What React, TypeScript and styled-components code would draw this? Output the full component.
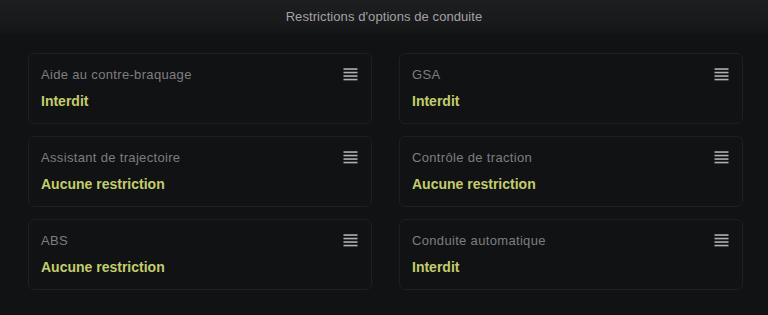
import React from "react";
import styled, { createGlobalStyle } from "styled-components";

interface Option {
  label: string;
  value: string;
}

const GlobalStyle = createGlobalStyle`
  html, body {
    margin: 0;
    padding: 0;
    background: #111214;
  }
  body {
    font-family: "Liberation Sans", Arial, sans-serif;
  }
`;

const Page = styled.div`
  width: 768px;
  height: 315px;
  background: #111214;
  overflow: hidden;
`;

const Header = styled.div`
  height: 34px;
  display: flex;
  align-items: center;
  justify-content: center;
  background: linear-gradient(180deg, #1d1e20 0%, #18191b 70%, #141517 100%);
`;

const Title = styled.p`
  margin: 0;
  margin-top: -2px;
  font-size: 13px;
  color: #a3a3a5;
  letter-spacing: 0.08px;
`;

const Grid = styled.div`
  display: grid;
  grid-template-columns: 344px 344px;
  column-gap: 27px;
  row-gap: 12px;
  padding: 19px 0 0 28px;
`;

const Card = styled.div`
  height: 71px;
  box-sizing: border-box;
  border: 1px solid #1e1f21;
  border-radius: 6px;
  background: #111214;
  padding: 12px 13px 0 12px;
  display: flex;
  flex-direction: column;
`;

const Row = styled.div`
  display: flex;
  justify-content: space-between;
  align-items: center;
  height: 16px;
`;

const Label = styled.div`
  font-size: 13px;
  letter-spacing: 0.33px;
  color: #7e7e80;
`;

const Value = styled.div`
  margin-top: 11px;
  font-size: 14px;
  font-weight: 700;
  color: #c3cd6c;
`;

const MenuIcon = () => (
  <svg width="15" height="13" viewBox="0 0 15 13" style={{ marginTop: 1 }}>
    {[1, 4.5, 8, 11.5].map((y) => (
      <rect key={y} x="0.5" y={y - 0.75} width="14" height="1.6" fill="#b0b0b2" />
    ))}
  </svg>
);

const options: Option[] = [
  { label: "Aide au contre-braquage", value: "Interdit" },
  { label: "GSA", value: "Interdit" },
  { label: "Assistant de trajectoire", value: "Aucune restriction" },
  { label: "Contrôle de traction", value: "Aucune restriction" },
  { label: "ABS", value: "Aucune restriction" },
  { label: "Conduite automatique", value: "Interdit" },
];

const App = () => {
  return (
    <Page>
      <GlobalStyle />
      <Header>
        <Title>Restrictions d'options de conduite</Title>
      </Header>
      <Grid>
        {options.map((opt) => (
          <Card key={opt.label}>
            <Row>
              <Label>{opt.label}</Label>
              <MenuIcon />
            </Row>
            <Value>{opt.value}</Value>
          </Card>
        ))}
      </Grid>
    </Page>
  );
};

export default App;
